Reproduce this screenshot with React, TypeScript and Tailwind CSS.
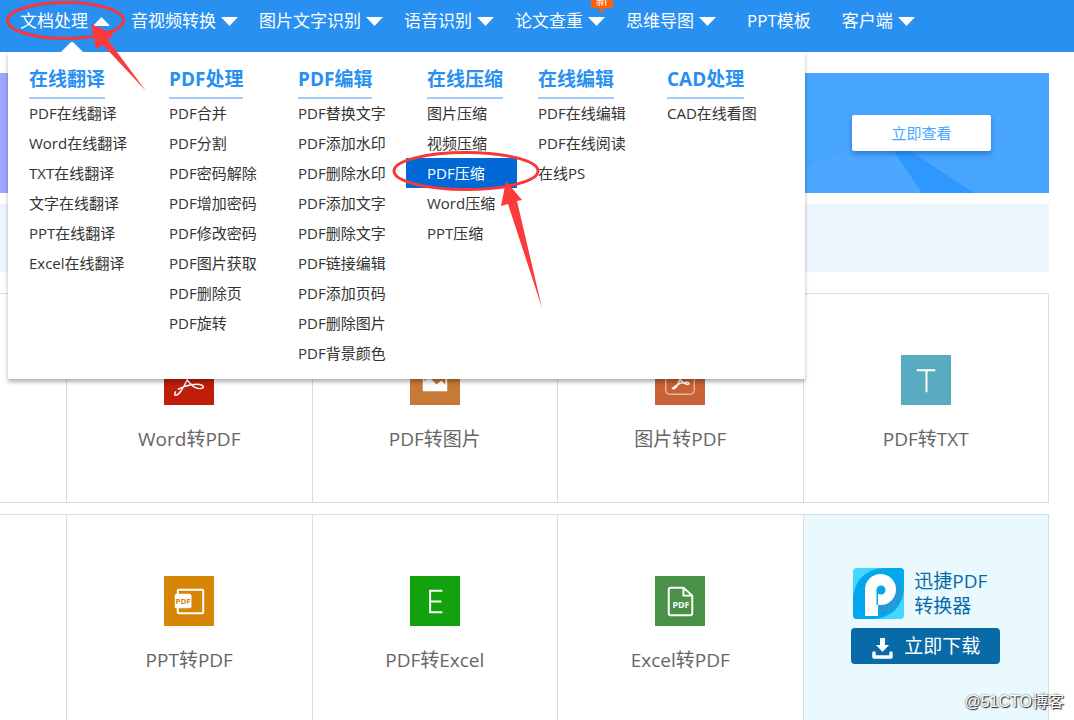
import React from "react";

type NavEntry = { label: string; arrow?: "up" | "down"; badge?: string };

const navEntries: NavEntry[] = [
  { label: "文档处理", arrow: "up" },
  { label: "音视频转换", arrow: "down" },
  { label: "图片文字识别", arrow: "down" },
  { label: "语音识别", arrow: "down" },
  { label: "论文查重", arrow: "down", badge: "新" },
  { label: "思维导图", arrow: "down" },
  { label: "PPT模板" },
  { label: "客户端", arrow: "down" },
];

const menuColumns = [
  {
    title: "在线翻译",
    items: ["PDF在线翻译", "Word在线翻译", "TXT在线翻译", "文字在线翻译", "PPT在线翻译", "Excel在线翻译"],
  },
  {
    title: "PDF处理",
    items: ["PDF合并", "PDF分割", "PDF密码解除", "PDF增加密码", "PDF修改密码", "PDF图片获取", "PDF删除页", "PDF旋转"],
  },
  {
    title: "PDF编辑",
    items: [
      "PDF替换文字",
      "PDF添加水印",
      "PDF删除水印",
      "PDF添加文字",
      "PDF删除文字",
      "PDF链接编辑",
      "PDF添加页码",
      "PDF删除图片",
      "PDF背景颜色",
    ],
  },
  { title: "在线压缩", items: ["图片压缩", "视频压缩", "PDF压缩", "Word压缩", "PPT压缩"] },
  { title: "在线编辑", items: ["PDF在线编辑", "PDF在线阅读", "在线PS"] },
  { title: "CAD处理", items: ["CAD在线看图"] },
];

const activeItem = "PDF压缩";

const Triangle = ({ up }: { up: boolean }) => (
  <svg width="17" height="9" viewBox="0 0 17 9" className="fill-white" aria-hidden="true">
    <path d={up ? "M0 9 8.5 0 17 9z" : "M0 0h17L8.5 9z"} />
  </svg>
);

const NavBar = () => (
  <nav className="flex h-[52px] items-start gap-[21px] bg-[#2890f1] pl-5 text-[17px] leading-[42px] text-white">
    {navEntries.map((entry) => (
      <a
        key={entry.label}
        href="#"
        className={`relative flex shrink-0 items-center gap-[5px] ${entry.arrow ? "" : "mx-[10px]"}`}
      >
        {entry.label}
        {entry.arrow && <Triangle up={entry.arrow === "up"} />}
        {entry.badge && (
          <span className="absolute -right-2 -top-2 h-4 w-[22px] rounded-xs bg-[#ff6009] text-center text-xs leading-[18px]">
            {entry.badge}
            <svg width="7" height="5" viewBox="0 0 7 5" className="absolute left-2 top-4 fill-[#ff6009]">
              <path d="M0 0h7L1 5z" />
            </svg>
          </span>
        )}
      </a>
    ))}
  </nav>
);

const MegaMenu = () => (
  <div className="absolute left-2 top-[52px] z-10 grid grid-cols-[140px_129px_129px_111px_129px_159px] bg-white pb-[11px] shadow-[0_3px_4px_rgba(0,0,0,0.3)]">
    <svg width="22" height="10" viewBox="0 0 22 10" className="absolute -top-[10px] left-[53px] fill-white">
      <path d="M0 10 9 1q2-2 4 0l9 9z" />
    </svg>
    {menuColumns.map((column) => (
      <section key={column.title}>
        <h2 className="ml-[21px] inline-block h-[47px] border-b-2 border-[#a3cbfb] pt-[13px] align-top text-[19px] font-bold leading-7 text-[#2890f1]">
          {column.title}
        </h2>
        <ul className="-mt-px">
          {column.items.map((item) => (
            <li key={item}>
              <a
                href="#"
                className={`block h-[30px] whitespace-nowrap pl-[21px] text-[15px] leading-[31px] ${
                  item === activeItem ? "bg-[#0069d6] text-white" : "text-[#333]"
                }`}
              >
                {item}
              </a>
            </li>
          ))}
        </ul>
      </section>
    ))}
  </div>
);

const Banner = () => (
  <div className="relative mt-[21px] mr-[25px] flex h-[120px] justify-end overflow-hidden bg-linear-to-r from-[#9fa5ff] from-5% to-[#47a4ff] to-60%">
    <svg viewBox="0 0 244 120" className="absolute right-0 top-0 h-[120px] w-[244px]" aria-hidden="true">
      <path d="M0 95 48 74 88 76 117 120H0z" fill="#4ca7ff" />
      <path d="M86 74 102 76 169 120H117z" fill="#2f98ff" />
    </svg>
    <button
      type="button"
      className="relative mt-[42px] mr-[58px] h-9 w-[139px] rounded-xs bg-white text-[15px] text-[#47a4ff] shadow-[0_3px_5px_rgba(0,60,140,0.4)]"
    >
      立即查看
    </button>
  </div>
);

const icons: Record<string, React.ReactNode> = {
  word: (
    <>
      <rect width="51" height="51" fill="#bf1e0a" />
      <path
        d="M12 37c-3 5 1 6 5 0 4-6 8-13 8-18 0-4-3-4-3 0 0 6 6 13 12 15 5 1 8-1 5-3-5-3-17 0-25 4"
        fill="none"
        stroke="#fff"
        strokeWidth="1.5"
      />
    </>
  ),
  picture: (
    <>
      <rect width="51" height="51" fill="#c87938" />
      <path d="M13 14h25v23H13z" fill="#fff" />
      <path d="M15 16h21v14l-4-4-5 4-8-8-4 5z" fill="#c87938" />
    </>
  ),
  pictureToPdf: (
    <>
      <rect width="51" height="51" fill="#c86237" />
      <rect x="11" y="11" width="29" height="29" rx="4" fill="none" stroke="#fff" strokeOpacity=".8" />
      <path
        d="M18 34c3 2 7-6 8-13 1-3-2-3-2 0 0 4 5 8 9 9 3 0 2-3-2-2-5 0-10 3-13 6z"
        fill="none"
        stroke="#fff"
        strokeWidth="1.5"
      />
    </>
  ),
  txt: (
    <>
      <rect width="51" height="51" fill="#58abc1" />
      <path d="M16 15.5h19M26 15.5V38" fill="none" stroke="#fff" strokeWidth="2" />
    </>
  ),
  ppt: (
    <>
      <rect width="51" height="51" fill="#d68504" />
      <rect x="14" y="14" width="26" height="24" rx="1" fill="none" stroke="#fff" strokeWidth="2" />
      <rect x="11" y="18" width="17" height="15" rx="2" fill="#fff" />
      <text x="19.5" y="29" fill="#d68504" fontSize="8" fontWeight="bold" textAnchor="middle">
        PDF
      </text>
    </>
  ),
  excel: (
    <>
      <rect width="51" height="51" fill="#13a10e" />
      <path d="M33 15H20.5v22H33M20.5 26H32" fill="none" stroke="#fff" strokeWidth="2" />
    </>
  ),
  excelToPdf: (
    <>
      <rect width="51" height="51" fill="#489146" />
      <path
        d="M16 12h13l9 8v18q0 2-2 2H16q-2 0-2-2V14q0-2 2-2zM29 12v8h9"
        fill="none"
        stroke="#fff"
        strokeWidth="2"
      />
      <text x="26.5" y="33" fill="#fff" fontSize="9" fontWeight="bold" textAnchor="middle">
        PDF
      </text>
    </>
  ),
};

const ToolCard = ({ icon, label }: { icon: string; label: string }) => (
  <a href="#" className="flex flex-col items-center border-r border-[#d3e0e2] pt-[61px] text-[19px] leading-7 text-[#666]">
    <svg width="50" height="50" viewBox="0 0 51 51" aria-hidden="true">
      {icons[icon]}
    </svg>
    <span className="mt-5">{label}</span>
  </a>
);

const DownloadCard = () => (
  <div className="flex flex-col items-center border-r border-[#d3e0e2] bg-[#e9f9fd] pt-[52px]">
    <div className="w-[149px]">
      <div className="flex items-center gap-[10px] pl-0.5 text-[19px] leading-[25px] text-[#0869a8]">
        <svg width="51" height="51" viewBox="0 0 51 51" className="shrink-0 rounded" aria-hidden="true">
          <rect width="51" height="51" fill="#45d6ff" />
          <path d="M0 51V33C0 13 13 0 33 0h18v18c0 20-13 33-33 33z" fill="#02a7ec" />
          <path d="M41 13 50 23c-2 11-9 19-19 24l-6-8V34z" fill="#249bd4" />
          <path d="M12 48V21.5A15.5 15.5 0 1 1 27.5 37H25v11z" fill="#fff" />
          <circle cx="28" cy="22" r="4.5" fill="#02a7ec" />
          <path d="M23.5 22H25v15h-1.500z" fill="#02a7ec" />
        </svg>
        <p className="pt-0.5">
          迅捷PDF
          <br />
          转换器
        </p>
      </div>
      <button
        type="button"
        className="mt-[9px] flex h-9 w-full items-center gap-[11px] rounded bg-[#086aa6] pl-[21px] text-[19px] text-white"
      >
        <svg width="21" height="21" viewBox="0 0 21 21" className="mt-1" aria-hidden="true">
          <path d="M8 0h5v7h4l-6.5 7L4 7h4z" fill="#fff" />
          <path d="M2 15v4h17v-4" fill="none" stroke="#fff" strokeWidth="3.5" strokeLinejoin="round" strokeLinecap="round" />
        </svg>
        立即下载
      </button>
    </div>
  </div>
);

const rowClass = "mr-[25px] grid h-[210px] grid-cols-[67px_repeat(4,minmax(0,1fr))] border-y border-[#d3e0e2]";

// Red marker circles and arrows over the menu
const Annotations = () => (
  <svg
    width="560"
    height="320"
    viewBox="0 0 560 320"
    className="pointer-events-none absolute left-0 top-0 z-20"
    aria-hidden="true"
  >
    <g fill="none" stroke="#f8373a" strokeWidth="3">
      <ellipse cx="65.5" cy="20.5" rx="58" ry="18" />
      <ellipse cx="466" cy="171" rx="72" ry="18.5" />
    </g>
    <g fill="#fd3a3b">
      <path d="M91 24 114 34 108 40 146 91 103 45 96 49z" />
      <path d="M506 181 522 200 517 201 542 308 508 204 501 206z" />
    </g>
  </svg>
);

const App = () => {
  return (
    <div className="relative h-screen overflow-hidden bg-white font-['Open_Sans','Noto_Sans_CJK_SC',sans-serif]">
      <NavBar />
      <MegaMenu />
      <main>
        <Banner />
        <div className="mt-[11px] mr-[25px] h-[68px] bg-[#eef7ff]"></div>

        {/* Conversion tools */}
        <div className={`mt-[21px] ${rowClass}`}>
          <div className="border-r border-[#d3e0e2]"></div>
          <ToolCard icon="word" label="Word转PDF" />
          <ToolCard icon="picture" label="PDF转图片" />
          <ToolCard icon="pictureToPdf" label="图片转PDF" />
          <ToolCard icon="txt" label="PDF转TXT" />
        </div>
        <div className={`mt-[11px] ${rowClass}`}>
          <div className="border-r border-[#d3e0e2]"></div>
          <ToolCard icon="ppt" label="PPT转PDF" />
          <ToolCard icon="excel" label="PDF转Excel" />
          <ToolCard icon="excelToPdf" label="Excel转PDF" />
          <DownloadCard />
        </div>
      </main>
      <Annotations />
      <span className="absolute right-[10px] bottom-[6px] z-20 font-['Liberation_Sans','Noto_Sans_CJK_SC',sans-serif] text-base leading-6 text-white [text-shadow:1px_1px_1px_#222,0_0_2px_#555]">
        @51CTO博客
      </span>
    </div>
  );
};

export default App;
